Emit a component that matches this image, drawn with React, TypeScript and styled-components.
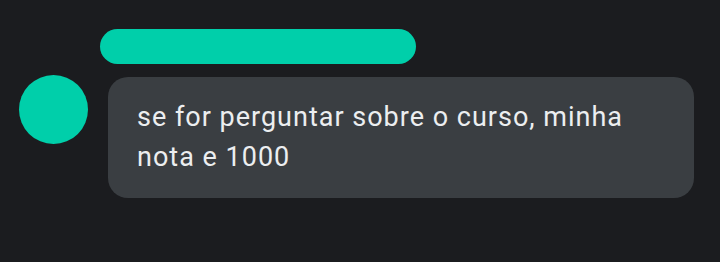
import React from 'react';
import styled, { createGlobalStyle } from 'styled-components';

const GlobalStyle = createGlobalStyle`
  html, body {
    margin: 0;
    padding: 0;
    background: #1b1c1f;
  }
`;

const Page = styled.div`
  width: 720px;
  height: 262px;
  box-sizing: border-box;
  padding: 29px 0 0 19px;
  background: #1b1c1f;
  font-family: Roboto, "Noto Sans", sans-serif;
`;

const NameBar = styled.div`
  width: 316px;
  height: 35px;
  margin-left: 81px;
  border-radius: 18px;
  background: #00cfaa;
`;

const MessageRow = styled.div`
  display: flex;
  align-items: flex-start;
  gap: 20px;
  margin-top: 11px;
`;

const Avatar = styled.div`
  width: 69px;
  height: 69px;
  flex-shrink: 0;
  border-radius: 50%;
  background: #00cfaa;
`;

const Bubble = styled.div`
  width: 586px;
  box-sizing: border-box;
  margin-top: 2px;
  padding: 20px 29px 21px;
  border-radius: 20px;
  background: #3a3e42;
  color: #eceef0;
  font-size: 27px;
  line-height: 40px;
  letter-spacing: 1px;
`;

export default function App() {
  return (
    <>
      <GlobalStyle />
      <Page>
        <NameBar />
        <MessageRow>
          <Avatar />
          <Bubble>se for perguntar sobre o curso, minha nota e 1000</Bubble>
        </MessageRow>
      </Page>
    </>
  );
}
